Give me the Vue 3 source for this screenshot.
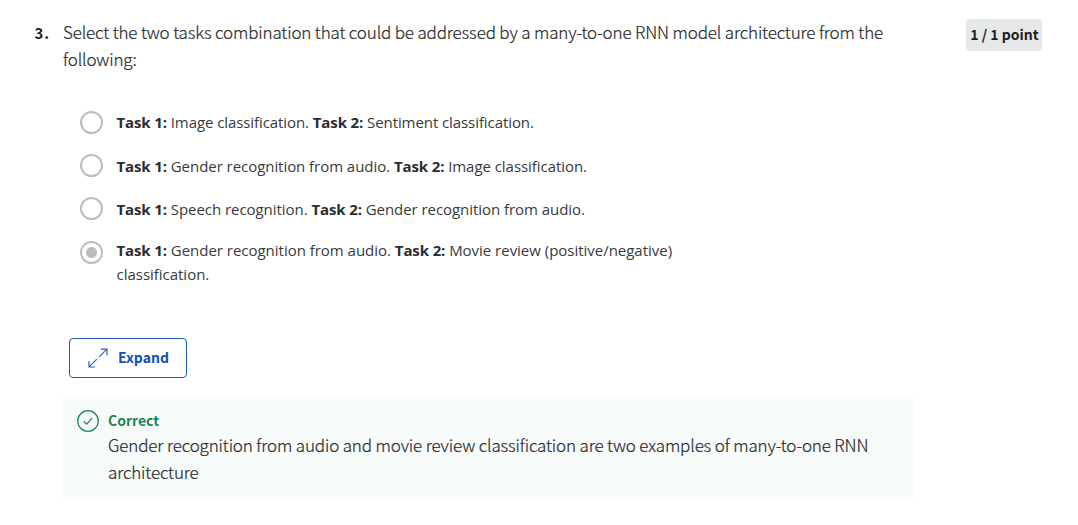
<script setup>
const options = [
  { first: 'Image classification.', second: 'Sentiment classification.', fit: 'snug' },
  { first: 'Gender recognition from audio.', second: 'Image classification.' },
  { first: 'Speech recognition.', second: 'Gender recognition from audio.' },
  { first: 'Gender recognition from audio.', second: 'Movie review (positive/negative) classification.', fit: 'checked' },
]
</script>

<template>
  <main class="quiz">
    <header class="question">
      <span class="number">3.</span>
      <p class="prompt">Select the two tasks combination that could be addressed by a many-to-one RNN model architecture from the following:</p>
      <span class="points">1 / 1 point</span>
    </header>

    <ul class="options">
      <li v-for="(option, i) in options" :key="i" class="option" :class="option.fit">
        <span class="radio"></span>
        <p class="label"><b>Task 1:</b> {{ option.first }} <b>Task 2:</b> {{ option.second }}</p>
      </li>
    </ul>

    <button class="expand" type="button">
      <svg width="20" height="20" viewBox="0 0 20 20" fill="none" stroke="#2a62b8" stroke-width="1.2">
        <path d="M11.2 8.8 18.7 1.3M13 1.2h6v6M8.8 11.2 1.3 18.7M1 13v6h6" />
      </svg>
      <span>Expand</span>
    </button>

    <section class="feedback">
      <svg class="check" width="22" height="22" viewBox="0 0 22 22" fill="none" stroke="#1f8354" stroke-width="1.2">
        <circle cx="11" cy="11" r="10.3" />
        <path d="m6.7 11.2 3.1 2.9 5.4-6.2" />
      </svg>
      <div>
        <h2 class="verdict">Correct</h2>
        <p class="explanation">Gender recognition from audio and movie review classification are two examples of many-to-one RNN architecture</p>
      </div>
    </section>
  </main>
</template>

<style>
body {
  background: #fff;
}
</style>

<style scoped>
.quiz {
  box-sizing: border-box;
  width: 1078px;
  height: 525px;
  overflow: hidden;
  padding: 19px 36px 0 34.5px;
  font-family: "Noto Sans CJK SC", "Noto Sans", sans-serif;
  color: #1f1f1f;
}
p, h2, ul {
  margin: 0;
  padding: 0;
}
.question {
  display: flex;
  align-items: flex-start;
}
.number {
  width: 28.5px;
  font-size: 15px;
  font-weight: 700;
  line-height: 27px;
  letter-spacing: 1px;
}
.prompt {
  width: 850px;
  margin-top: -1px;
  font-size: 17px;
  font-weight: 300;
  line-height: 27px;
  letter-spacing: -0.155px;
  color: #2a2a2a;
  -webkit-text-stroke: 0.2px #2a2a2a;
}
.points {
  box-sizing: border-box;
  width: 76px;
  height: 32px;
  margin-left: auto;
  border-radius: 4px;
  background: #e5e7e8;
  font-size: 14px;
  font-weight: 700;
  line-height: 31px;
  text-align: center;
  text-indent: 1px;
  white-space: nowrap;
}
.options {
  list-style: none;
  margin: 39px 0 0 45.5px;
  font-family: "Open Sans", "Noto Sans", sans-serif;
}
.option {
  display: flex;
  align-items: center;
  height: 23px;
  margin-bottom: 20px;
}
.radio {
  flex: none;
  box-sizing: border-box;
  width: 23px;
  height: 23px;
  border: 2px solid #bdbdbd;
  border-radius: 50%;
}
.label {
  width: 600px;
  margin-left: 13.5px;
  font-size: 15px;
  line-height: 24px;
  letter-spacing: -0.05px;
  color: #373a3c;
}
.label b {
  letter-spacing: -0.12px;
  color: #2a2d2f;
}
.snug .label {
  margin-top: -2px;
  letter-spacing: -0.08px;
}
.option.checked {
  align-items: flex-start;
  height: 48px;
  margin: 0;
}
.checked .radio {
  margin-top: 1px;
  background: radial-gradient(circle, #bdbdbd 5px, transparent 6px);
}
.checked .label {
  margin-top: -2px;
  letter-spacing: -0.02px;
}
.expand {
  box-sizing: border-box;
  display: flex;
  align-items: center;
  width: 118px;
  height: 40px;
  margin: 50px 0 0 34.5px;
  padding: 0 0 0 18px;
  border: 1px solid #1f5cba;
  border-radius: 4px;
  background: #fff;
  color: #0f52b8;
  font-family: inherit;
  font-size: 14px;
  font-weight: 700;
}
.expand span {
  margin: -3px 0 0 10px;
}
.feedback {
  box-sizing: border-box;
  display: flex;
  width: 851px;
  height: 102px;
  margin: 19px 0 0 28.5px;
  padding: 13px 0 0 14px;
  background: #f7fbfa;
}
.check {
  flex: none;
  margin-right: 9px;
}
.verdict {
  margin-top: -1px;
  font-size: 14px;
  line-height: 22px;
  color: #1f8354;
}
.explanation {
  width: 780px;
  font-size: 17px;
  font-weight: 300;
  line-height: 27px;
  letter-spacing: -0.15px;
  color: #2a2a2a;
  -webkit-text-stroke: 0.2px #2a2a2a;
}
</style>
